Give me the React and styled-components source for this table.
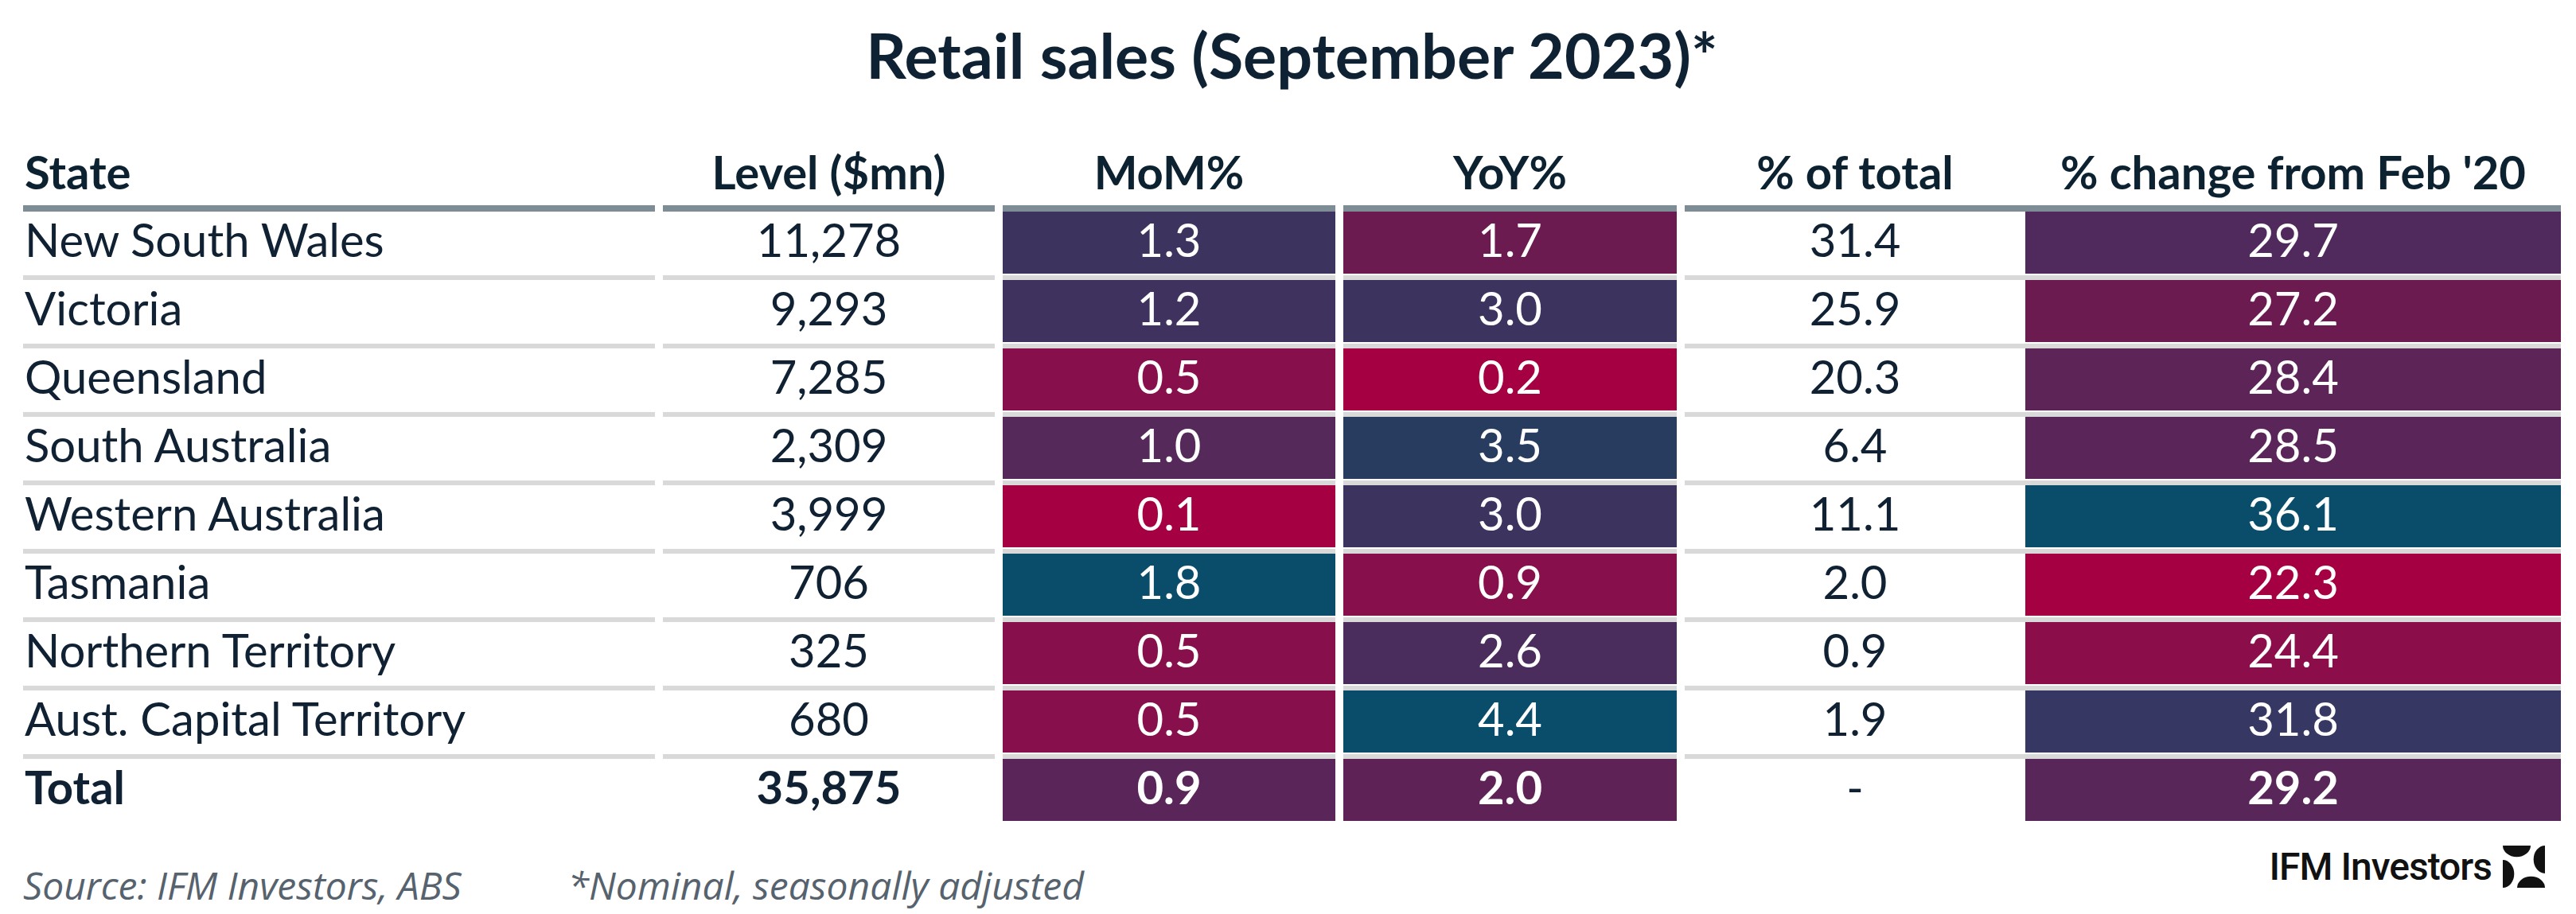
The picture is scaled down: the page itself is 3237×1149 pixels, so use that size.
import React from 'react'
import styled, { createGlobalStyle } from 'styled-components';

const GlobalStyle = createGlobalStyle`
  body {
    margin: 0;
    background: #ffffff;
  }
`;

const columns = [
  { w: 794, gap: 0, align: 'left' },
  { w: 417, gap: 10 },
  { w: 418, gap: 10 },
  { w: 419, gap: 10 },
  { w: 428, gap: 10 },
  { w: 673, gap: 0 },
];

const heads = ['State', 'Level ($mn)', 'MoM%', 'YoY%', '% of total', "% change from Feb '20"];

const rows = [
  ['New South Wales', '11,278', ['1.3', '#3c335f'], ['1.7', '#6b1b50'], '31.4', ['29.7', '#502a5c']],
  ['Victoria', '9,293', ['1.2', '#3f325f'], ['3.0', '#3c335f'], '25.9', ['27.2', '#6b1b50']],
  ['Queensland', '7,285', ['0.5', '#87104c'], ['0.2', '#a50042'], '20.3', ['28.4', '#5c2457']],
  ['South Australia', '2,309', ['1.0', '#552a5a'], ['3.5', '#283c60'], '6.4', ['28.5', '#5a2558']],
  ['Western Australia', '3,999', ['0.1', '#a50042'], ['3.0', '#3c335f'], '11.1', ['36.1', '#0a4d6b']],
  ['Tasmania', '706', ['1.8', '#0a4d6b'], ['0.9', '#87104c'], '2.0', ['22.3', '#a50042']],
  ['Northern Territory', '325', ['0.5', '#87104c'], ['2.6', '#4a2d5d'], '0.9', ['24.4', '#8b0e4b']],
  ['Aust. Capital Territory', '680', ['0.5', '#87104c'], ['4.4', '#0a4d6b'], '1.9', ['31.8', '#363762']],
];

const total = ['Total', '35,875', ['0.9', '#5a2558'], ['2.0', '#5e2256'], '-', ['29.2', '#582659']];

const IfmMark = () => (
  <svg width="53" height="53" viewBox="0 0 100 100">
    <path d="M0,0 H66 A33,27 0 0 1 0,0 Z" fill="#111" />
    <path d="M100,0 V66 A27,33 0 0 1 100,0 Z" fill="#111" />
    <path d="M100,100 H34 A33,27 0 0 1 100,100 Z" fill="#111" />
    <path d="M0,100 V34 A27,33 0 0 1 0,100 Z" fill="#111" />
  </svg>
);

const App = () => {
  const renderRow = (row, idx, bold) => (
    <Row key={idx}>
      {row.map((v, i) => {
        const col = columns[i];
        const filled = Array.isArray(v);
        return (
          <Cell
            key={i}
            $w={col.w}
            $gap={col.gap}
            $align={col.align}
            $bg={filled ? v[1] : null}
            $sep={idx > 0}
            $bold={bold && v !== '-'}
          >
            {filled ? v[0] : v}
          </Cell>
        );
      })}
    </Row>
  );

  return (
    <Page>
      <GlobalStyle />
      <Title>Retail sales (September 2023)*</Title>
      <Table>
        <Row>
          {heads.map((h, i) => (
            <HeadCell key={h} $w={columns[i].w} $gap={columns[i].gap} $align={columns[i].align}>
              {h}
            </HeadCell>
          ))}
        </Row>
        {rows.map((r, idx) => renderRow(r, idx, false))}
        {renderRow(total, rows.length, true)}
      </Table>
      <Footer>
        <Notes>
          <Note>Source: IFM Investors, ABS</Note>
          <Note $offset={134}>*Nominal, seasonally adjusted</Note>
        </Notes>
        <Brand>
          <BrandName>IFM Investors</BrandName>
          <IfmMark />
        </Brand>
      </Footer>
    </Page>
  )
}

const Page = styled.div`
  width: 3237px;
  height: 1149px;
  box-sizing: border-box;
  padding: 0 19px 0 29px;
  overflow: hidden;
  font-family: Lato, "Open Sans", sans-serif;
  color: #0f2132;
`;

const Title = styled.h1`
  margin: 0;
  padding-top: 30px;
  font-size: 79px;
  line-height: 78px;
  font-weight: 700;
  text-align: center;
  color: #0e2233;
`;

const Table = styled.div`
  display: flex;
  flex-direction: column;
`;

const Row = styled.div`
  display: flex;
`;

const HeadCell = styled.div`
  width: ${p => p.$w}px;
  margin-left: ${p => p.$gap}px;
  height: 158px;
  box-sizing: border-box;
  display: flex;
  align-items: flex-end;
  justify-content: ${p => (p.$align === 'left' ? 'flex-start' : 'center')};
  padding: 0 0 13px ${p => (p.$align === 'left' ? '2px' : '0')};
  border-bottom: 8px solid #7d8c95;
  font-size: 58px;
  line-height: 58px;
  font-weight: 700;
  color: #0d2231;
  white-space: nowrap;
`;

const Cell = styled.div`
  width: ${p => p.$w}px;
  margin-left: ${p => p.$gap}px;
  margin-top: ${p => (p.$sep ? '2px' : '0')};
  height: 78px;
  box-sizing: content-box;
  padding: 0 0 0 ${p => (p.$align === 'left' ? '2px' : '0')};
  border-top: ${p => (p.$sep ? '6px solid #d9d9d9' : 'none')};
  background: ${p => p.$bg || '#ffffff'};
  color: ${p => (p.$bg ? '#ffffff' : '#0f2132')};
  text-align: ${p => p.$align || 'center'};
  font-size: 58px;
  line-height: 70px;
  font-weight: ${p => (p.$bold ? 700 : 400)};
  white-space: nowrap;
  ${p => p.$align === 'left' && `width: ${p.$w - 2}px;`}
`;

const Footer = styled.div`
  display: flex;
  justify-content: space-between;
  align-items: flex-start;
`;

const Notes = styled.div`
  display: flex;
  margin-top: 57px;
`;

const Note = styled.span`
  margin-left: ${p => p.$offset || 0}px;
  font-family: "Open Sans", sans-serif;
  font-style: italic;
  font-size: 48px;
  line-height: 48px;
  color: #56626d;
  white-space: nowrap;
`;

const Brand = styled.div`
  display: flex;
  align-items: center;
  gap: 14px;
  margin-top: 29px;
  margin-right: 20px;
`;

const BrandName = styled.span`
  font-family: Roboto, "Liberation Sans", sans-serif;
  font-weight: 500;
  font-size: 48px;
  letter-spacing: -1px;
  color: #111111;
`;

export default App
